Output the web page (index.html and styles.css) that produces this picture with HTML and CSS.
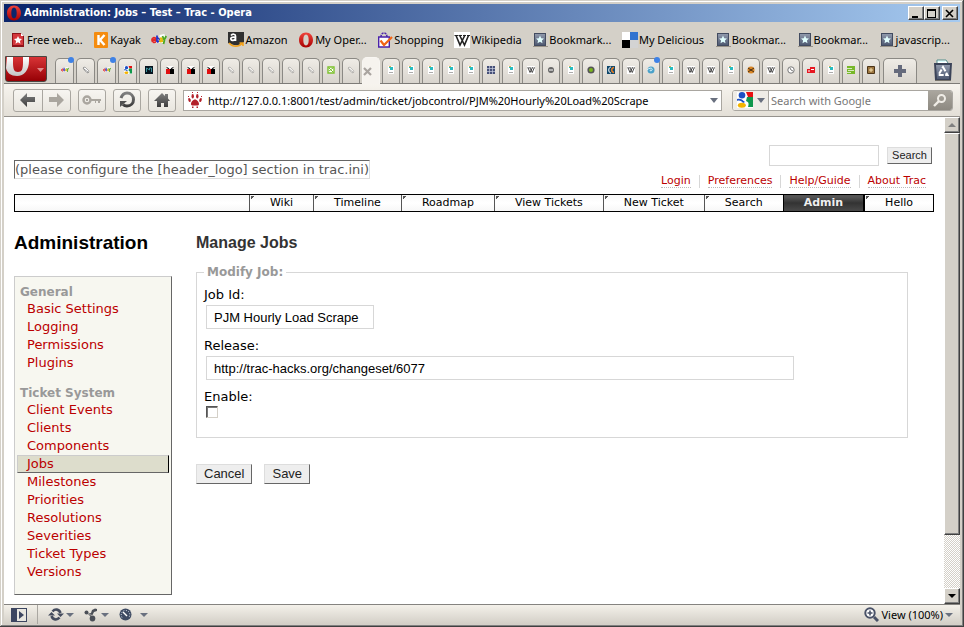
FILE: index.html
```html
<!DOCTYPE html>
<html lang="en">
<head>
<meta charset="utf-8">
<title>Administration: Jobs – Test – Trac</title>
<link rel="stylesheet" href="styles.css">
</head>
<body>
<svg class="defs" aria-hidden="true">
  <defs>
    <linearGradient id="red" x1="0" y1="0" x2="0" y2="1"><stop offset="0" stop-color="#f0443c"/><stop offset="1" stop-color="#a80000"/></linearGradient>
    <linearGradient id="silver" x1="0" y1="0" x2="0" y2="1"><stop offset="0" stop-color="#ffffff"/><stop offset="1" stop-color="#c4c4c4"/></linearGradient>
    <linearGradient id="slate" x1="0" y1="0" x2="0" y2="1"><stop offset="0" stop-color="#8f98ab"/><stop offset="1" stop-color="#4f5a72"/></linearGradient>
    <linearGradient id="dark" x1="0" y1="0" x2="0" y2="1"><stop offset="0" stop-color="#808080"/><stop offset="1" stop-color="#3c3c3c"/></linearGradient>
  </defs>
  <symbol id="opera" viewBox="0 0 16 16"><path fill="url(#red)" fill-rule="evenodd" d="M8 .5C3.800.5 1 3.700 1 8s2.800 7.500 7 7.500 7-3.200 7-7.500S12.200.5 8 .5zM8 2.500c1.800 0 2.700 2.300 2.700 5.500S9.800 13.500 8 13.500 5.300 11.200 5.300 8 6.200 2.500 8 2.500z"/></symbol>
  <symbol id="mark" viewBox="0 0 16 16"><path fill="#999389" d="M1 14h15v1H1z"/><path fill="#424b60" d="M2 1h12v13H2z"/><path fill="url(#slate)" d="M3 2h10v11H3z"/><path fill="#e2ffff" d="M8 3.500l1.200 2.700 2.800.300-2.100 1.900.600 2.800L8 9.700l-2.500 1.500.600-2.800L4 6.500l2.800-.300z"/></symbol>
  <symbol id="markred" viewBox="0 0 16 16"><path fill="#8e1319" d="M2 1h9l3 3v11H2z"/><path fill="#d4373c" d="M3 2h8v2h2v9H3z"/><path fill="#fff" d="M11 1l3 3h-3zM8 4l1.200 2.600 2.800.400-2.100 1.900.600 2.800L8 10.200l-2.500 1.500.600-2.800L4 7l2.800-.400z"/></symbol>
  <symbol id="kayak" viewBox="0 0 16 16"><rect width="14" height="16" x="1" rx="1" fill="#f58c0f"/><path fill="none" stroke="#fff" stroke-width="2.400" d="M5.500 3v10M11.500 3L7 8l4.500 5"/></symbol>
  <symbol id="ebay" viewBox="0 0 16 16"><g fill="none" stroke-width="1.800"><path stroke="#fff" stroke-width="6" d="M1 8h12M9 6l5-1"/><path stroke="#e02828" d="M1.500 8h3.500c0-3-4-3-4 0s3 2.500 4 1.500"/><path stroke="#2434c8" d="M6 3.500V10M6 6.500c3-1.500 3.500 3.500 0 3.500"/><path stroke="#e8b80c" d="M8.500 6.500c2.500-1 3 0 3 3.500M11.500 8c-4-.5-3 3 0 1"/><path stroke="#4ca824" d="M11.500 4l1.700 4L15.200 4M13.500 8l-1 4"/></g></symbol>
  <symbol id="amazon" viewBox="0 0 16 16"><path fill="#303030" d="M0 0h16v10c-4 4-10 4-16 1z"/><path fill="none" stroke="#fff" stroke-width="1.700" d="M3 3.500c1.500-2 4.500-1.500 4.500.5v5M7.500 5.500C4 4.500 2.200 6 3 7.500s3.500 1 4.500-.700"/><path fill="none" stroke="#f2a21c" stroke-width="1.600" d="M1 11c4 4.500 10 4 13 .500M11.500 11H15v3"/></symbol>
  <symbol id="shop" viewBox="0 0 16 16"><path fill="#fff" stroke="#4a22aa" stroke-width="1.400" d="M1.700 5h10.600v10H1.700z"/><path fill="none" stroke="#4a22aa" stroke-width="1.500" stroke-dasharray="2 1" d="M4 5c0-5.500 6-5.500 6 0"/><path fill="none" stroke="#f26414" stroke-width="2.200" d="M3.500 8.500L7 13l8-8"/></symbol>
  <symbol id="wiki" viewBox="0 0 16 16"><path fill="#fff" d="M0 0h16v16H0z"/><path fill="none" stroke="#222" stroke-width="1.600" d="M2 3.500L6 13l5-10M5.500 3l5 10L14.500 3.500"/><path stroke="#222" d="M.5 3.500h4M5 3.500h3M9 3.500h3M13 3.500h3"/></symbol>
  <symbol id="delicious" viewBox="0 0 16 16"><path fill="#fff" d="M0 0h8v8H0z"/><path fill="#3274d0" d="M8 0h8v8H8z"/><path d="M0 8h8v8H0z"/><path fill="#d3d3d3" d="M8 8h8v8H8z"/></symbol>
  <symbol id="google" viewBox="0 0 16 16"><path fill="#fff" d="M0 0h16v16H0z"/><path fill="#e81010" d="M9 0h7v5h-5z"/><path fill="#10984c" d="M10 5h6v10h-5c1-3 1-5-2-6z"/><circle cx="5" cy="3.300" r="3.300" fill="#1c50c4"/><path fill="#1c50c4" d="M0 7c3-1 5 0 8 3l-2 1C5 9 2 8 0 9z"/><ellipse cx="4.800" cy="13.300" rx="4" ry="2.500" fill="#f4b400"/></symbol>
  <symbol id="pen" viewBox="0 0 8 8"><path fill="#fff" stroke="#555" stroke-dasharray="1 .5" stroke-width=".8" d="M1 2l2-1 4 4-1 2-2-1z"/><path stroke="#777" stroke-width=".7" d="M2 3l4 3"/></symbol>
  <symbol id="night" viewBox="0 0 8 8"><path fill="#07151f" d="M0 0h8v8H0z"/><path fill="none" stroke="#48aeb9" stroke-width=".8" d="M1.500 6V2l3 2V2h2v4"/></symbol>
  <symbol id="gift" viewBox="0 0 8 8"><path fill="#fff" d="M1 0h6v3H1z"/><path fill="#e01010" d="M0 3h4v5H0z"/><path d="M4 3h4v5H4zM0 1l2 .5L3.500 3H2zM8 1l-2 .5L4.500 3H6z"/></symbol>
  <symbol id="greenbox" viewBox="0 0 8 8"><path fill="#fff" stroke="#7cc12c" stroke-width="1.400" d="M1 1h6v6H1z"/><path fill="none" stroke="#7cc12c" d="M2 2l4 4M2 5l4-3"/></symbol>
  <symbol id="trac" viewBox="0 0 8 8"><path fill="#fff" d="M1 0h6v8H1z"/><path fill="#e0b050" d="M2 0h2v1H2z"/><path fill="#28bcc0" d="M2 1h4v3H3V2H2z"/><path fill="#aaa" d="M2 6h4v1H2z"/></symbol>
  <symbol id="gridicon" viewBox="0 0 8 8"><path fill="#465078" d="M0 0h8v8H0z"/><path stroke="#c9cee0" stroke-width=".7" d="M0 2.500h8M0 5.500h8M2.500 0v8M5.500 0v8"/></symbol>
  <symbol id="minus" viewBox="0 0 8 8"><circle cx="4" cy="4" r="3" fill="#666"/><path stroke="#fff" d="M2 4h4"/></symbol>
  <symbol id="ring" viewBox="0 0 8 8"><circle cx="4" cy="4" r="2.800" fill="#79b51e" stroke="#555" stroke-width="1.600"/></symbol>
  <symbol id="cbox" viewBox="0 0 8 8"><path fill="#10486c" d="M0 0h8v8H0z"/><path fill="none" stroke="#fff" d="M4 1C1 1 1 7 4 7"/><path fill="none" stroke="#f28020" stroke-width="1.400" d="M7 1.500C4 2 4 6 7 6.500"/></symbol>
  <symbol id="sphere" viewBox="0 0 8 8"><circle cx="4" cy="4" r="3.500" fill="#4aa1c9"/><path fill="none" stroke="#e2f6fc" d="M0 4c3-3 6-2 5 0s-3 0-1 0"/></symbol>
  <symbol id="amber" viewBox="0 0 8 8"><circle cx="4" cy="4" r="3.500" fill="#d98524"/><path fill="none" stroke="#443018" d="M1 2l3 2-3 2M7 2L4 4l3 2"/></symbol>
  <symbol id="clock" viewBox="0 0 8 8"><circle cx="4" cy="4" r="3.200" fill="#fff" stroke="#777"/><path fill="none" stroke="#555" stroke-width=".8" d="M3 2l1 2 2 1"/></symbol>
  <symbol id="redtile" viewBox="0 0 8 8"><path fill="#e71822" d="M0 3h3V1h5v6H0z"/><path stroke="#fff" d="M1 5h2M4 3.500h3"/></symbol>
  <symbol id="greentile" viewBox="0 0 8 8"><path fill="#78b82a" d="M0 0h8v8H0z"/><path stroke="#fff" stroke-width=".7" d="M0 2.500h5M1 4.500h6M0 6.500h4"/></symbol>
  <symbol id="browntile" viewBox="0 0 8 8"><path fill="#9c7640" stroke="#4c3518" d="M.5.5h7v7h-7z"/><path stroke="#f5dfad" d="M4 2v4M2 4h4"/></symbol>
  <symbol id="paw" viewBox="0 0 16 16"><g fill="#b3202a"><path d="M8 7.500c2 0 4 2.500 4 4.500s-2 1.500-4 1.500S4 14 4 12s2-4.500 4-4.500z"/><ellipse cx="5.700" cy="4.300" rx="1.200" ry="2.200"/><ellipse cx="10.300" cy="4.300" rx="1.200" ry="2.200"/><ellipse cx="2.500" cy="8" rx="1.200" ry="2" transform="rotate(-20 2.500 8)"/><ellipse cx="13.500" cy="8" rx="1.200" ry="2" transform="rotate(20 13.500 8)"/><path d="M5 0h1v1H5zM10 0h1v1h-1zM1 4h1v1H1zM14 4h1v1h-1zM5 14.500h1.500V16H5zM9.500 14.500H11V16H9.500z"/></g></symbol>
</svg>

<header class="titlebar">
  <svg class="i16"><use href="#opera"/></svg>
  <span class="title">Administration: Jobs – Test – Trac - Opera</span>
  <div class="wincontrols">
    <button aria-label="Minimize"><svg width="10" height="9"><path d="M1 7h6v2H1z"/></svg></button>
    <button aria-label="Maximize"><svg width="10" height="9"><path fill-rule="evenodd" d="M0 0h9v9H0zM1 2v6h7V2z"/></svg></button>
    <button class="close" aria-label="Close"><svg width="10" height="9"><path stroke="#000" stroke-width="1.600" d="M1 1l7 7M8 1L1 8"/></svg></button>
  </div>
</header>

<nav class="bookmarks" aria-label="Bookmarks">
  <a href="#"><svg class="i16"><use href="#markred"/></svg>Free web...</a>
  <a href="#"><svg class="i16"><use href="#kayak"/></svg>Kayak</a>
  <a href="#"><svg class="i16"><use href="#ebay"/></svg>ebay.com</a>
  <a href="#"><svg class="i16"><use href="#amazon"/></svg>Amazon</a>
  <a href="#"><svg class="i16"><use href="#opera"/></svg>My Oper...</a>
  <a href="#"><svg class="i16"><use href="#shop"/></svg>Shopping</a>
  <a href="#"><svg class="i16"><use href="#wiki"/></svg>Wikipedia</a>
  <a href="#"><svg class="i16"><use href="#mark"/></svg>Bookmark...</a>
  <a href="#"><svg class="i16"><use href="#delicious"/></svg>My Delicious</a>
  <a href="#"><svg class="i16"><use href="#mark"/></svg>Bookmar...</a>
  <a href="#"><svg class="i16"><use href="#mark"/></svg>Bookmar...</a>
  <a href="#"><svg class="i16"><use href="#mark"/></svg>javascrip...</a>
</nav>

<div class="tabbar">
  <button class="menu" aria-label="Menu"><svg width="40" height="24" viewBox="0 0 40 24"><path fill="url(#silver)" d="M1 0h6v5c0 7 1 10 5 10s5-3 5-10V0h6v4c0 9-5 15-12 15C5 19 1 16 0 11z"/><path fill="#e08c8c" d="M31 11h7l-3.500 4z"/></svg></button>
  <div class="tabs">
    <button class="tab wide dot"><svg><use href="#ebay"/></svg></button>
    <button class="tab wide"><svg><use href="#pen"/></svg></button>
    <button class="tab wide dot"><svg><use href="#ebay"/></svg></button>
    <button class="tab wide"><svg><use href="#google"/></svg></button>
    <button class="tab wide"><svg><use href="#night"/></svg></button>
    <button class="tab wide"><svg><use href="#gift"/></svg></button>
    <button class="tab wide"><svg><use href="#gift"/></svg></button>
    <button class="tab"><svg><use href="#gift"/></svg></button>
    <button class="tab faint"><svg><use href="#pen"/></svg></button>
    <button class="tab faint"><svg><use href="#pen"/></svg></button>
    <button class="tab faint"><svg><use href="#pen"/></svg></button>
    <button class="tab faint"><svg><use href="#pen"/></svg></button>
    <button class="tab faint"><svg><use href="#pen"/></svg></button>
    <button class="tab"><svg><use href="#greenbox"/></svg></button>
    <button class="tab faint"><svg><use href="#pen"/></svg></button>
    <button class="tab active" aria-label="Close tab"><svg viewBox="0 0 9 9"><path stroke="#aaa5a0" stroke-width="2.200" d="M1 1l7 7M8 1L1 8"/></svg></button>
    <button class="tab"><svg><use href="#trac"/></svg></button>
    <button class="tab"><svg><use href="#trac"/></svg></button>
    <button class="tab"><svg><use href="#trac"/></svg></button>
    <button class="tab"><svg><use href="#trac"/></svg></button>
    <button class="tab"><svg><use href="#trac"/></svg></button>
    <button class="tab"><svg><use href="#gridicon"/></svg></button>
    <button class="tab"><svg><use href="#trac"/></svg></button>
    <button class="tab"><svg><use href="#wiki"/></svg></button>
    <button class="tab"><svg><use href="#minus"/></svg></button>
    <button class="tab"><svg><use href="#trac"/></svg></button>
    <button class="tab"><svg><use href="#ring"/></svg></button>
    <button class="tab"><svg><use href="#cbox"/></svg></button>
    <button class="tab"><svg><use href="#wiki"/></svg></button>
    <button class="tab dot"><svg><use href="#sphere"/></svg></button>
    <button class="tab"><svg><use href="#trac"/></svg></button>
    <button class="tab"><svg><use href="#wiki"/></svg></button>
    <button class="tab"><svg><use href="#wiki"/></svg></button>
    <button class="tab"><svg><use href="#trac"/></svg></button>
    <button class="tab"><svg><use href="#amber"/></svg></button>
    <button class="tab"><svg><use href="#wiki"/></svg></button>
    <button class="tab"><svg><use href="#clock"/></svg></button>
    <button class="tab"><svg><use href="#redtile"/></svg></button>
    <button class="tab"><svg><use href="#trac"/></svg></button>
    <button class="tab"><svg><use href="#greentile"/></svg></button>
    <button class="tab"><svg><use href="#browntile"/></svg></button>
    <button class="tab new" aria-label="New tab"><svg viewBox="0 0 12 12"><path fill="#656a7c" d="M4 0h4v4h4v4H8v4H4V8H0V4h4z"/></svg></button>
  </div>
  <button class="trash" aria-label="Closed tabs"><svg width="20" height="23" viewBox="0 0 20 23"><path fill="#fff" stroke="#55908f" d="M4 4V1h9l2 3"/><path fill="#d9ffff" d="M5 2h7v1H5z"/><path fill="#3b4358" d="M1 4h18l-1 17H2z"/><path fill="url(#slate)" d="M3 6h14l-1 14H4z"/><path fill="none" stroke="#fff" stroke-width="2" stroke-dasharray="5 1.500" d="M10 8l4.500 8h-9z"/><path fill="#77736b" d="M2 21h16v1H2z"/></svg></button>
</div>

<div class="toolbar">
  <div class="pair">
    <button class="tool" aria-label="Back"><svg width="16" height="14"><path fill="url(#dark)" d="M0 7l7-7v4h8v5H7v5z"/></svg></button>
    <button class="tool" aria-label="Forward"><svg width="16" height="14"><path fill="#aaa69f" d="M15 7L8 0v4H0v5h8v5z"/></svg></button>
  </div>
  <button class="tool" aria-label="Log in"><svg width="20" height="12"><circle cx="5" cy="6" r="3.500" fill="none" stroke="#aaa69f" stroke-width="2.400"/><path fill="#aaa69f" d="M9 5h10v2h-1v2h-2V7h-2v2h-1V7H9zM4 5h2v2H4z"/></svg></button>
  <button class="tool" aria-label="Reload"><svg width="18" height="18"><path fill="none" stroke="url(#dark)" stroke-width="3" d="M3 7c1-3 3-5 6-5 4 0 6.500 3 6.500 6.500S13 15 9 15c-2 0-3-.5-4-1.500"/><path fill="#505050" d="M2 10h7l-7 6z"/></svg></button>
  <button class="tool" aria-label="Home"><svg width="16" height="16"><path fill="url(#dark)" d="M8 1l3 3V2h3v4.500L16 9h-2v6h-4v-4H7v4H3V9H0z"/></svg></button>
  <div class="address">
    <svg class="i16"><use href="#paw"/></svg>
    <input type="text" aria-label="Address" value="http://127.0.0.1:8001/test/admin/ticket/jobcontrol/PJM%20Hourly%20Load%20Scrape">
    <svg class="arrow" width="8" height="5"><path d="M0 0h8L4 5z"/></svg>
  </div>
  <div class="searchbox">
    <button class="engine" aria-label="Search engine"><svg class="i16"><use href="#google"/></svg><svg class="arrow" width="8" height="5"><path d="M0 0h8L4 5z"/></svg></button>
    <input type="text" aria-label="Web search" placeholder="Search with Google">
    <button class="go" aria-label="Go"><svg width="14" height="14"><circle cx="8.500" cy="5.500" r="3.500" fill="none" stroke="#efece6" stroke-width="2"/><path stroke="#efece6" stroke-width="2.400" d="M6 8l-5 5"/></svg></button>
  </div>
</div>

<div class="viewport">
  <main class="page">
    <div class="banner">
      <a class="logo" href="#">(please configure the [header_logo] section in trac.ini)</a>
      <div class="account">
        <form class="quick"><input type="text" aria-label="Search Trac"><button type="button">Search</button></form>
        <ul class="metanav">
          <li><a href="#">Login</a></li>
          <li><a href="#">Preferences</a></li>
          <li><a href="#">Help/Guide</a></li>
          <li><a href="#">About Trac</a></li>
        </ul>
      </div>
    </div>
    <ul class="mainnav">
      <li><a href="#">Wiki</a></li>
      <li><a href="#">Timeline</a></li>
      <li><a href="#">Roadmap</a></li>
      <li><a href="#">View Tickets</a></li>
      <li><a href="#">New Ticket</a></li>
      <li><a href="#">Search</a></li>
      <li class="current"><a href="#">Admin</a></li>
      <li><a href="#">Hello</a></li>
    </ul>
    <div class="columns">
      <aside>
        <h1>Administration</h1>
        <div class="panel">
          <h3>General</h3>
          <ul>
            <li><a href="#">Basic Settings</a></li>
            <li><a href="#">Logging</a></li>
            <li><a href="#">Permissions</a></li>
            <li><a href="#">Plugins</a></li>
          </ul>
          <h3>Ticket System</h3>
          <ul>
            <li><a href="#">Client Events</a></li>
            <li><a href="#">Clients</a></li>
            <li><a href="#">Components</a></li>
            <li class="on"><a href="#">Jobs</a></li>
            <li><a href="#">Milestones</a></li>
            <li><a href="#">Priorities</a></li>
            <li><a href="#">Resolutions</a></li>
            <li><a href="#">Severities</a></li>
            <li><a href="#">Ticket Types</a></li>
            <li><a href="#">Versions</a></li>
          </ul>
        </div>
      </aside>
      <section>
        <h2>Manage Jobs</h2>
        <form>
          <fieldset>
            <legend>Modify Job:</legend>
            <div class="field"><label for="jobid">Job Id:</label><input class="short" id="jobid" type="text" value="PJM Hourly Load Scrape"></div>
            <div class="field"><label for="release">Release:</label><input class="long" id="release" type="text" value="http://trac-hacks.org/changeset/6077"></div>
            <div class="field"><label for="enable">Enable:</label><input id="enable" type="checkbox"></div>
          </fieldset>
          <div class="actions"><button type="button">Cancel</button><button type="button">Save</button></div>
        </form>
      </section>
    </div>
  </main>
  <div class="scrollbar">
    <button class="bevel" aria-label="Scroll up"><svg width="8" height="4"><path fill="#808080" d="M4 0l4 4H0z"/></svg></button>
    <div class="bevel thumb"></div>
    <div class="track"></div>
    <button class="bevel" aria-label="Scroll down"><svg width="8" height="4"><path d="M4 4l4-4H0z"/></svg></button>
  </div>
</div>

<footer class="status">
  <button class="panels" aria-label="Panels"><svg width="16" height="14"><path fill="#3c4560" d="M0 0h16v14H0z"/><path fill="#e8e6e0" d="M6 1h9v12H6z"/><path fill="#3c4560" d="M8 3l5 4-5 4z"/></svg></button>
  <button aria-label="Sync"><svg width="16" height="13"><path fill="none" stroke="#454c5e" stroke-width="2.600" d="M4.500 3.500C7 .5 11 1 12.500 5M11.500 9.500C9 12.500 5 12 3.500 8"/><path fill="#454c5e" d="M0 7.500L3.500 4 7 7.500zM9 5.500h7L12.500 9z"/></svg><svg class="arrow" width="8" height="4"><path d="M0 0h8L4 4z"/></svg></button>
  <button aria-label="Unite"><svg width="15" height="14"><g fill="#4b4f57"><circle cx="2.500" cy="4.500" r="2"/><path d="M3 6l4-1 1-3 3-1.500 2 .5v2l-3 1-1.500 3z"/><ellipse cx="8.500" cy="10.500" rx="2.800" ry="3"/><path d="M4 6l4 2-1 1z"/></g></svg><svg class="arrow" width="8" height="4"><path d="M0 0h8L4 4z"/></svg></button>
  <button class="turbo" aria-label="Turbo"><svg width="13" height="13"><circle cx="6.500" cy="6.500" r="6" fill="#3f4b63"/><path fill="none" stroke="#c9d2e0" stroke-dasharray="1 1.500" d="M3 9.500c-2-4 0-7 3.500-7s5.500 3 3.500 7"/><path stroke="#fff" stroke-width="1.500" d="M4 4l4 4"/></svg><svg class="arrow" width="8" height="4"><path d="M0 0h8L4 4z"/></svg></button>
  <button class="view"><svg width="15" height="15"><circle cx="6" cy="6" r="4.700" fill="#fff" stroke="#4a5268" stroke-width="2"/><path stroke="#4a5268" stroke-width="1.600" d="M3.500 6h5M6 3.500v5"/><path stroke="#4a5268" stroke-width="3" d="M10 10l4 4"/></svg>View (100%)<svg class="arrow" width="8" height="4"><path d="M0 0h8L4 4z"/></svg></button>
</footer>
</body>
</html>
```
FILE: styles.css
```css
* { box-sizing: border-box; }
html, body { height: 100%; margin: 0; }
body {
  display: flex;
  flex-direction: column;
  padding: 4px 4px 3px;
  background: #d4d0c8;
  box-shadow: inset -1px -1px #404040, inset 1px 1px #d4d0c8, inset -2px -2px #808080, inset 2px 2px #fff;
  font: 11px/14px "Noto Sans", sans-serif;
  color: #000;
}
button, input { font: inherit; margin: 0; color: inherit; }
button { padding: 0; border: 0; background: none; }
a { text-decoration: none; color: inherit; }
ul { list-style: none; margin: 0; padding: 0; }
.defs { position: absolute; width: 0; height: 0; }
.i16 { width: 16px; height: 16px; flex: none; }
.arrow { fill: #69707f; flex: none; }

.titlebar {
  display: flex;
  align-items: center;
  flex: none;
  height: 18px;
  padding: 0 2px;
  background: linear-gradient(90deg, #0a246a, #a6caf0);
  color: #fff;
  font-family: "DejaVu Sans Condensed", "DejaVu Sans", sans-serif;
  font-weight: bold;
}
.title { flex: 1; padding-left: 2px; }
.wincontrols { display: flex; }
.wincontrols button, .bevel {
  display: flex;
  align-items: center;
  justify-content: center;
  background: #d4d0c8;
  border: 1px solid;
  border-color: #fff #404040 #404040 #fff;
  box-shadow: inset -1px -1px #808080;
}
.wincontrols button { width: 16px; height: 14px; }
.wincontrols .close { margin-left: 2px; }

.bookmarks {
  display: flex;
  flex: none;
  align-items: center;
  justify-content: space-between;
  height: 34px;
  padding: 2px 10px 0 6px;
  white-space: nowrap;
}
.bookmarks a { display: flex; align-items: center; gap: 1px; }

.tabbar {
  display: flex;
  flex: none;
  align-items: flex-end;
  height: 28px;
  border-bottom: 1px solid #7d7b77;
}
.menu {
  width: 42px;
  height: 26px;
  margin: 0 8px 1px 1px;
  border: 1px solid #4c4540;
  border-radius: 0 0 3px 3px;
  background: linear-gradient(#d83436, #960005);
  overflow: hidden;
}
.menu svg { display: block; }
.tabs { display: flex; flex: 1; gap: 2px; }
.tab {
  position: relative;
  display: flex;
  align-items: center;
  justify-content: center;
  width: 18px;
  height: 25px;
  border: 1px solid #8b8984;
  border-bottom: 0;
  border-radius: 5px 5px 0 0;
  background: linear-gradient(#efece6, #d8d4cd);
}
.tab svg { width: 8px; height: 8px; margin-top: -2px; }
.tab.wide { width: 19px; }
.tab.faint svg { opacity: .6; }
.tab.active { justify-content: flex-start; height: 27px; margin: -1px 0; border-color: #f8f6f2; background: #f6f3ee; }
.tab.active svg { width: 9px; height: 9px; margin: 0; }
.tab.new { width: 34px; margin-left: 1px; }
.tab.new svg { width: 12px; height: 12px; margin: 0; }
.dot::after {
  content: "";
  position: absolute;
  top: -2px;
  right: -1px;
  width: 6px;
  height: 6px;
  border-radius: 50%;
  background: #3f82e6;
}
.trash { width: 20px; height: 23px; margin: 0 7px 1px; }
.trash svg { display: block; }

.toolbar {
  display: flex;
  flex: none;
  align-items: center;
  gap: 7px;
  height: 33px;
  padding: 0 7px 0 9px;
  border-bottom: 1px solid #95928d;
  background: linear-gradient(#f7f4ee, #e3dfd7);
}
.pair { display: flex; }
.tool {
  display: flex;
  align-items: center;
  justify-content: center;
  width: 28px;
  height: 23px;
  border: 1px solid #a9a6a0;
  border-radius: 3px;
  background: linear-gradient(#f7f5f1, #e9e6df);
}
.pair .tool { width: 30px; border-radius: 3px 0 0 3px; }
.pair .tool + .tool { width: 29px; margin-left: -1px; border-radius: 0 3px 3px 0; }
.address, .searchbox { display: flex; align-items: center; height: 21px; border: 1px solid #a9a6a0; background: #fff; }
.address { flex: 1; padding: 0 3px; }
.address input, .searchbox input { flex: 1; min-width: 0; padding: 2px 0 0 5px; border: 0; background: none; outline: 0; }
.searchbox { width: 221px; margin-left: 3px; border-radius: 3px; overflow: hidden; }
.searchbox input { padding: 2px 2px 0; }
.searchbox input::placeholder { color: #777; opacity: 1; }
.engine { display: flex; align-items: center; gap: 4px; height: 100%; padding: 0 3px 0 4px; border-right: 1px solid #a9a6a0; background: #efece6; }
.go { display: flex; align-items: center; justify-content: center; width: 24px; height: 100%; background: linear-gradient(#aaa69e, #8d8981); }

.viewport { display: flex; flex: 1; min-height: 0; overflow: hidden; background: #fff; }
.page { flex: 1; min-width: 0; padding: 28px 10px 0; font: 13px/18px "DejaVu Sans", Verdana, sans-serif; }
.page a { color: #b00; }
.banner { display: flex; align-items: flex-end; justify-content: space-between; padding-bottom: 6px; }
.page .logo {
  margin-bottom: 9px;
  border: 1px solid;
  border-color: #666 #ddd #ddd #666;
  color: #555;
  line-height: 17px;
}
.account { display: flex; flex-direction: column; align-items: flex-end; gap: 9px; }
.quick { display: flex; align-items: center; gap: 8px; padding-right: 2px; }
.quick input { width: 110px; height: 21px; border: 1px solid #d7d7d7; }
.quick button, .actions button {
  border: 1px solid;
  border-color: #ddd #666 #666 #ddd;
  background: #eee;
  color: #222;
  font-family: "Liberation Sans", Arial, sans-serif;
}
.quick button { width: 45px; height: 17px; font-size: 11px; line-height: 15px; }
.metanav { display: flex; font-size: 11px; line-height: 12px; }
.metanav li { padding: 0 8px; border-left: 1px solid #d7d7d7; }
.metanav li:first-child { border: 0; }
.metanav a { display: block; border-bottom: 1px dotted #bbb; }
.mainnav {
  display: flex;
  justify-content: flex-end;
  height: 18px;
  border: 1px solid #000;
  background: linear-gradient(#f8f8f8, #fff 50%, #f7f7f7);
  font-size: 11px;
  line-height: 16px;
}
.mainnav li { padding: 0 20px; border-left: 1px solid #555; background: linear-gradient(135deg, #555 50%, transparent 50%) 1px 1px / 4px 4px no-repeat; }
.mainnav a { color: #000; }
.mainnav .current { background: linear-gradient(#555 0 2px, #333 50%, #494949); font-weight: bold; border-color: #000; }
.mainnav .current a { color: #eee; }
.mainnav .current + li { border-left: 2px solid #000; }
.columns { display: flex; align-items: flex-start; gap: 24px; padding-top: 20px; }
aside { flex: none; width: 158px; }
h1, h2 { margin: 0; font-family: "Liberation Sans", Arial, sans-serif; line-height: 22px; }
h1 { font-size: 19px; }
h2 { font-size: 16px; color: #333; }
.panel {
  margin-top: 22px;
  padding: 7px 2px 13px;
  border: 1px solid;
  border-color: #ccc #666 #666 #ccc;
  background: #f7f7f0;
}
.panel h3 { margin: 0; padding: 0 3px; font-size: 12px; line-height: 16px; color: #999; }
.panel ul { margin-bottom: 13px; }
.panel ul:last-child { margin-bottom: 0; }
.panel li { height: 18px; padding: 0 9px; border: 1px solid transparent; line-height: 16px; }
.panel .on { background: #ddddcc; border-color: #ccc #000 #666 #ccc; }
section { flex: 1; padding-right: 26px; }
fieldset { min-width: 0; margin: 0; margin-top: 9px; padding: 5px 7px 11px; border: 1px solid #d7d7d7; }
legend { padding: 0 3px; font-weight: bold; color: #999; font-size: 12px; }
.field { margin-bottom: 8px; }
.field label { display: block; line-height: 18px; }
.field input[type="text"] {
  display: block;
  max-width: 100%;
  height: 24px;
  margin: 1px 2px 0;
  padding: 0 7px;
  border: 1px solid #d7d7d7;
  font-family: "Liberation Sans", Arial, sans-serif;
}
.field .short { width: 168px; }
.field .long { width: 588px; }
.field input[type="checkbox"] {
  appearance: none;
  display: block;
  width: 12px;
  height: 12px;
  margin: 0 2px;
  border: 1px solid;
  border-color: #555 #d4d0c8 #d4d0c8 #555;
  box-shadow: inset 1px 1px #777;
}
.actions { display: flex; gap: 12px; margin-top: 26px; }
.actions button { height: 20px; padding: 0 7px; line-height: 18px; }

.scrollbar { display: flex; flex-direction: column; flex: none; width: 16px; }
.scrollbar button { height: 16px; }
.thumb { flex: 401; }
.track { flex: 53; background: conic-gradient(#fff 25%, #d4d0c8 0 50%, #fff 0 75%, #d4d0c8 0) 0 0 / 2px 2px; }

.status {
  display: flex;
  flex: none;
  align-items: center;
  gap: 10px;
  height: 20px;
  padding: 0 7px;
  border-top: 1px solid #858380;
  background: linear-gradient(#f4f1ea, #d3cfc7);
}
.status button { display: flex; align-items: center; gap: 2px; height: 100%; }
.status .panels { padding-right: 10px; border-right: 1px solid #aaa7a1; }
.status .turbo { gap: 8px; }
.status .view { margin-left: auto; gap: 2px; }
```
